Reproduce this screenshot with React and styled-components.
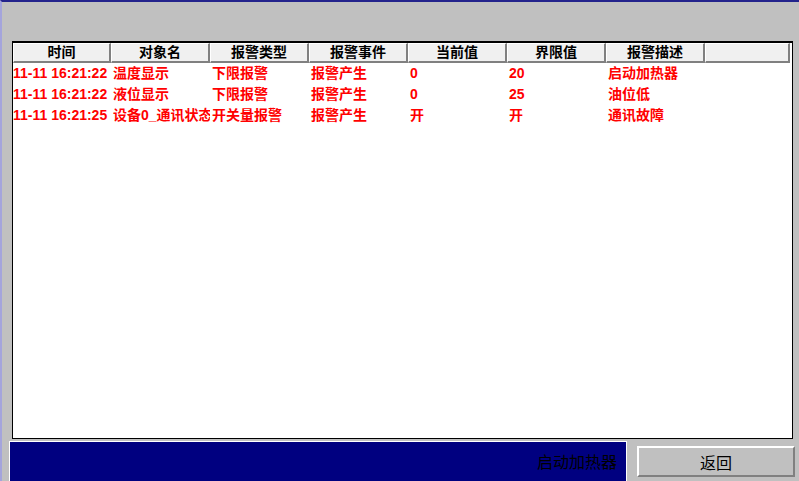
import React from "react"
import styled, { createGlobalStyle } from "styled-components"

const GlobalStyle = createGlobalStyle`
  html, body {
    margin: 0;
    padding: 0;
    background: #c0c0c0;
  }
`

const columns = [
  { key: "time", title: "时间" },
  { key: "name", title: "对象名" },
  { key: "type", title: "报警类型" },
  { key: "event", title: "报警事件" },
  { key: "value", title: "当前值" },
  { key: "limit", title: "界限值" },
  { key: "desc", title: "报警描述" },
]

const rows = [
  {
    time: "11-11 16:21:22",
    name: "温度显示",
    type: "下限报警",
    event: "报警产生",
    value: "0",
    limit: "20",
    desc: "启动加热器",
  },
  {
    time: "11-11 16:21:22",
    name: "液位显示",
    type: "下限报警",
    event: "报警产生",
    value: "0",
    limit: "25",
    desc: "油位低",
  },
  {
    time: "11-11 16:21:25",
    name: "设备0_通讯状态",
    type: "开关量报警",
    event: "报警产生",
    value: "开",
    limit: "开",
    desc: "通讯故障",
  },
]

const gridCols = "98px repeat(6, 99px) 85px"

const Screen = styled.div`
  width: 799px;
  height: 481px;
  box-sizing: border-box;
  display: flex;
  flex-direction: column;
  background: #c0c0c0;
  border-top: 2px solid #23238c;
  border-left: 2px solid #a4a4dc;
  overflow: hidden;
  font-family: "Liberation Sans", "Noto Sans CJK SC", sans-serif;
`

const TopGap = styled.div`
  height: 39px;
  flex: none;
`

const TableBox = styled.div`
  margin-left: 10px;
  width: 781px;
  height: 398px;
  box-sizing: border-box;
  flex: none;
  background: #fff;
  border: 1px solid #000;
  border-top-width: 2px;
  overflow: hidden;
`

const HeaderRow = styled.div`
  display: grid;
  grid-template-columns: ${gridCols};
  height: 20px;
`

const HeaderCell = styled.div`
  box-sizing: border-box;
  background: #f0f0f0;
  border-style: solid;
  border-width: 1px 2px 2px 1px;
  border-color: #fff #808080 #808080 #fff;
  font-size: 14px;
  font-weight: 700;
  color: #000;
  text-align: center;
  line-height: 17px;
  white-space: nowrap;
  overflow: hidden;
`

const DataRow = styled.div`
  display: grid;
  grid-template-columns: ${gridCols};
  height: 21px;
`

const DataCell = styled.div`
  padding-left: ${p => (p.$first ? "0" : "2px")};
  font-size: 14px;
  font-weight: 700;
  color: #ff0000;
  line-height: 21px;
  white-space: nowrap;
  overflow: hidden;
`

const BottomRow = styled.div`
  display: flex;
  margin-top: 2px;
  flex: 1;
`

const StatusBar = styled.div`
  margin-left: 7px;
  width: 618px;
  box-sizing: border-box;
  background: #000080;
  border: 1px solid #fff;
  border-bottom: none;
  display: flex;
  align-items: center;
  justify-content: flex-end;
  padding-right: 9px;
  padding-bottom: 2px;
  font-family: "Noto Sans CJK SC", sans-serif;
  font-size: 16px;
  color: #000;
`

const BackButton = styled.button`
  margin: 5px 0 0 10px;
  width: 158px;
  height: 31px;
  box-sizing: border-box;
  background: #c0c0c0;
  border-style: solid;
  border-width: 2px;
  border-color: #fff #808080 #808080 #fff;
  font-family: "Noto Sans CJK SC", sans-serif;
  font-size: 16px;
  color: #000;
  padding: 0;
`

export default function App() {
  return (
    <>
      <GlobalStyle />
      <Screen>
        <TopGap />
        <TableBox>
          <HeaderRow>
            {columns.map(c => (
              <HeaderCell key={c.key}>{c.title}</HeaderCell>
            ))}
            <HeaderCell />
          </HeaderRow>
          {rows.map((r, i) => (
            <DataRow key={i}>
              {columns.map((c, j) => (
                <DataCell key={c.key} $first={j === 0}>
                  {r[c.key]}
                </DataCell>
              ))}
            </DataRow>
          ))}
        </TableBox>
        <BottomRow>
          <StatusBar>启动加热器</StatusBar>
          <BackButton>返回</BackButton>
        </BottomRow>
      </Screen>
    </>
  )
}
